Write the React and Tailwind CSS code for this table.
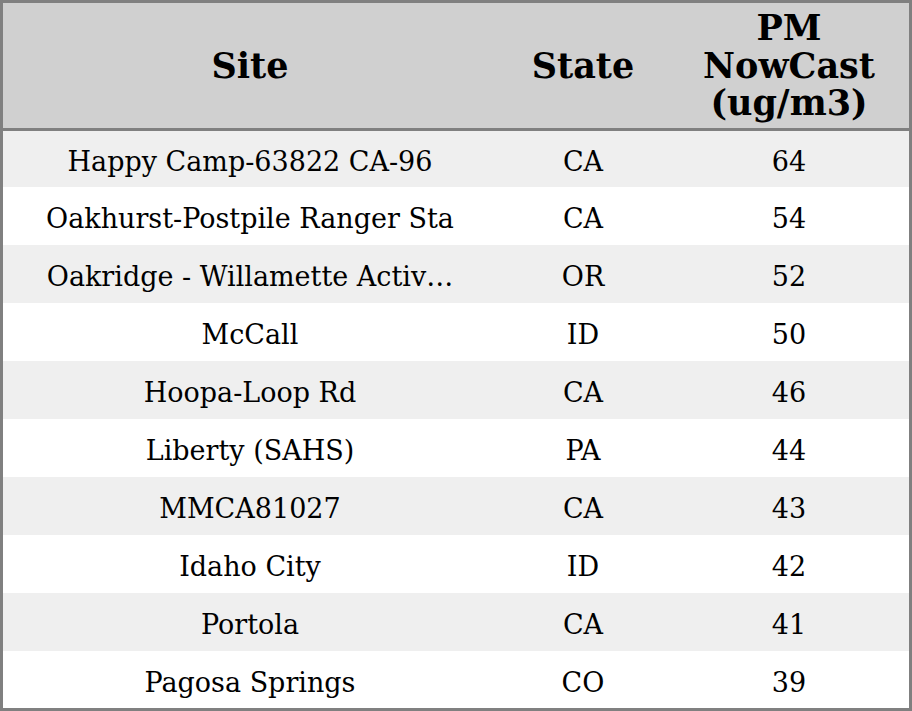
import React from 'react';

const rows = [
  { site: 'Happy Camp-63822 CA-96', state: 'CA', pm: 64 },
  { site: 'Oakhurst-Postpile Ranger Sta', state: 'CA', pm: 54 },
  { site: 'Oakridge - Willamette Activ\u2026', state: 'OR', pm: 52 },
  { site: 'McCall', state: 'ID', pm: 50 },
  { site: 'Hoopa-Loop Rd', state: 'CA', pm: 46 },
  { site: 'Liberty (SAHS)', state: 'PA', pm: 44 },
  { site: 'MMCA81027', state: 'CA', pm: 43 },
  { site: 'Idaho City', state: 'ID', pm: 42 },
  { site: 'Portola', state: 'CA', pm: 41 },
  { site: 'Pagosa Springs', state: 'CO', pm: 39 },
];

// first and last rows are a touch shorter so the 10 rows fill 577px
const heights = ['h-[56px]', 'h-[58px]', 'h-[58px]', 'h-[58px]', 'h-[58px]', 'h-[58px]', 'h-[58px]', 'h-[58px]', 'h-[58px]', 'h-[57px]'];

const App = () => {
  return (
    <div className="w-[912px] h-[711px] bg-white border-[3px] border-[#808080] text-black font-['DejaVu_Serif',serif] overflow-hidden">
      {/* Header */}
      <div className="grid grid-cols-[494px_172px_240px] h-[128px] bg-[#d0d0d0] border-b-[3px] border-[#808080] text-[35px] font-bold leading-[37.5px]">
        <div className="flex items-center justify-center text-center">Site</div>
        <div className="flex items-center justify-center text-center">State</div>
        <div className="flex items-center justify-center text-center">
          PM
          <br />
          NowCast
          <br />
          (ug/m3)
        </div>
      </div>

      {/* Rows */}
      {rows.map((row, i) => (
        <div
          key={i}
          className={`grid grid-cols-[494px_172px_240px] items-center text-[27px] leading-[32px] pt-[6px] ${heights[i]} ${i % 2 === 0 ? 'bg-[#efefef]' : 'bg-white'}`}
        >
          <div className="text-center whitespace-nowrap">{row.site}</div>
          <div className="text-center">{row.state}</div>
          <div className="text-center">{row.pm}</div>
        </div>
      ))}
    </div>
  );
};

export default App;
